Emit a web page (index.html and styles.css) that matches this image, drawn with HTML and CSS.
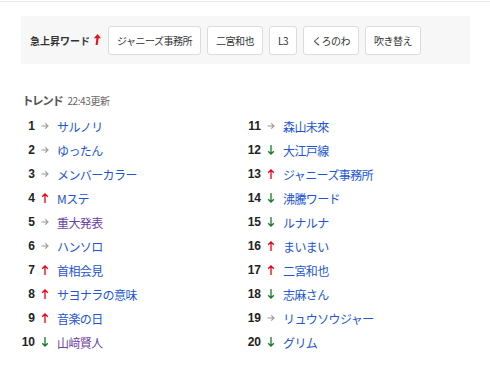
FILE: index.html
```html
<!DOCTYPE html>
<html lang="ja">
<head>
<meta charset="utf-8">
<link rel="stylesheet" href="styles.css">
</head>
<body>
<div class="page">
  <div class="rising">
    <span class="rising-label">急上昇ワード<svg class="hot" width="8" height="11" viewBox="0 0 8 11"><path d="M4.6 0 L8 4.2 L5.6 4.2 L4.6 11 L2.6 11 L3.4 4.2 L0.8 4.2 Z" fill="#e0141e"/></svg></span>
    <a class="chip">ジャニーズ事務所</a>
    <a class="chip">二宮和也</a>
    <a class="chip">L3</a>
    <a class="chip">くろのわ</a>
    <a class="chip">吹き替え</a>
  </div>
  <div class="trend-head"><span class="trend-title">トレンド</span><span class="trend-time">22:43更新</span></div>
  <div class="trend-cols">
    <ol class="col">
      <li class="row"><span class="rank">1</span><span class="ar flat"></span><a class="word">サルノリ</a></li>
      <li class="row"><span class="rank">2</span><span class="ar flat"></span><a class="word">ゆったん</a></li>
      <li class="row"><span class="rank">3</span><span class="ar flat"></span><a class="word">メンバーカラー</a></li>
      <li class="row"><span class="rank">4</span><span class="ar up"></span><a class="word">Mステ</a></li>
      <li class="row"><span class="rank">5</span><span class="ar flat"></span><a class="word visited">重大発表</a></li>
      <li class="row"><span class="rank">6</span><span class="ar flat"></span><a class="word">ハンソロ</a></li>
      <li class="row"><span class="rank">7</span><span class="ar up"></span><a class="word">首相会見</a></li>
      <li class="row"><span class="rank">8</span><span class="ar up"></span><a class="word">サヨナラの意味</a></li>
      <li class="row"><span class="rank">9</span><span class="ar up"></span><a class="word">音楽の日</a></li>
      <li class="row"><span class="rank">10</span><span class="ar down"></span><a class="word visited">山﨑賢人</a></li>
    </ol>
    <ol class="col">
      <li class="row"><span class="rank">11</span><span class="ar flat"></span><a class="word">森山未來</a></li>
      <li class="row"><span class="rank">12</span><span class="ar down"></span><a class="word">大江戸線</a></li>
      <li class="row"><span class="rank">13</span><span class="ar up"></span><a class="word">ジャニーズ事務所</a></li>
      <li class="row"><span class="rank">14</span><span class="ar down"></span><a class="word">沸騰ワード</a></li>
      <li class="row"><span class="rank">15</span><span class="ar down"></span><a class="word">ルナルナ</a></li>
      <li class="row"><span class="rank">16</span><span class="ar up"></span><a class="word">まいまい</a></li>
      <li class="row"><span class="rank">17</span><span class="ar up"></span><a class="word">二宮和也</a></li>
      <li class="row"><span class="rank">18</span><span class="ar down"></span><a class="word">志麻さん</a></li>
      <li class="row"><span class="rank">19</span><span class="ar flat"></span><a class="word">リュウソウジャー</a></li>
      <li class="row"><span class="rank">20</span><span class="ar down"></span><a class="word">グリム</a></li>
    </ol>
  </div>
</div>
</body>
</html>
```
FILE: styles.css
```css
html, body {
  margin: 0;
  padding: 0;
  background: #fff;
}
body {
  font-family: "Noto Sans CJK JP", "Liberation Sans", sans-serif;
  color: #333;
}
.page {
  margin-top: 1px;
  border-top: 1px solid #e6e6e6;
  padding: 14px 20px 0 21px;
}
.rising {
  display: flex;
  align-items: center;
  gap: 6px;
  background: #f7f7f7;
  height: 48px;
  padding: 0 9px;
  width: 431px;
}
.rising-label {
  display: flex;
  align-items: center;
  gap: 3px;
  flex: none;
  white-space: nowrap;
  font-size: 10px;
  font-weight: bold;
  color: #333;
  margin-right: 1px;
}
.hot { margin-top: -1px; }
.chip {
  display: flex;
  align-items: center;
  flex: none;
  white-space: nowrap;
  height: 27px;
  padding: 0 8px;
  background: #fff;
  border: 1px solid #dcdcdc;
  border-radius: 3px;
  font-size: 10px;
  letter-spacing: -0.5px;
  color: #333;
}
.trend-head {
  display: flex;
  align-items: baseline;
  gap: 5px;
  margin-top: 28px;
  margin-left: 1px;
  height: 19px;
}
.trend-title {
  font-size: 11.5px;
  font-weight: bold;
  color: #555;
  letter-spacing: -1.4px;
}
.trend-time {
  font-size: 10px;
  color: #666;
  letter-spacing: -0.4px;
}
.trend-cols {
  display: grid;
  grid-template-columns: 226px 226px;
  margin-top: 3px;
}
.col {
  list-style: none;
  margin: 0;
  padding: 0;
}
.row {
  display: flex;
  align-items: center;
  height: 24px;
}
.rank {
  width: 14px;
  text-align: right;
  font-family: "Liberation Sans", sans-serif;
  font-weight: bold;
  font-size: 12px;
  color: #222;
}
.ar {
  width: 8px;
  height: 10px;
  margin: 0 8px 0 6px;
  background-repeat: no-repeat;
  background-position: center;
}
.ar.flat {
  background-image: url("data:image/svg+xml,%3Csvg xmlns='http://www.w3.org/2000/svg' width='8' height='10' viewBox='0 0 8 10'%3E%3Cpath d='M0.5 5 H7 M4.2 2.3 L7 5 L4.2 7.7' fill='none' stroke='%23999' stroke-width='1.1'/%3E%3C/svg%3E");
}
.ar.up {
  background-image: url("data:image/svg+xml,%3Csvg xmlns='http://www.w3.org/2000/svg' width='8' height='10' viewBox='0 0 8 10'%3E%3Cpath d='M4 10 V1 M1.2 3.8 L4 1 L6.8 3.8' fill='none' stroke='%23e60012' stroke-width='1.3'/%3E%3C/svg%3E");
}
.ar.down {
  background-image: url("data:image/svg+xml,%3Csvg xmlns='http://www.w3.org/2000/svg' width='8' height='10' viewBox='0 0 8 10'%3E%3Cpath d='M4 0 V9 M1.2 6.2 L4 9 L6.8 6.2' fill='none' stroke='%23127a2a' stroke-width='1.3'/%3E%3C/svg%3E");
}
.word {
  font-size: 12px;
  letter-spacing: -0.6px;
  color: #2255d4;
}
.word.visited {
  color: #6b3fa0;
}
```
